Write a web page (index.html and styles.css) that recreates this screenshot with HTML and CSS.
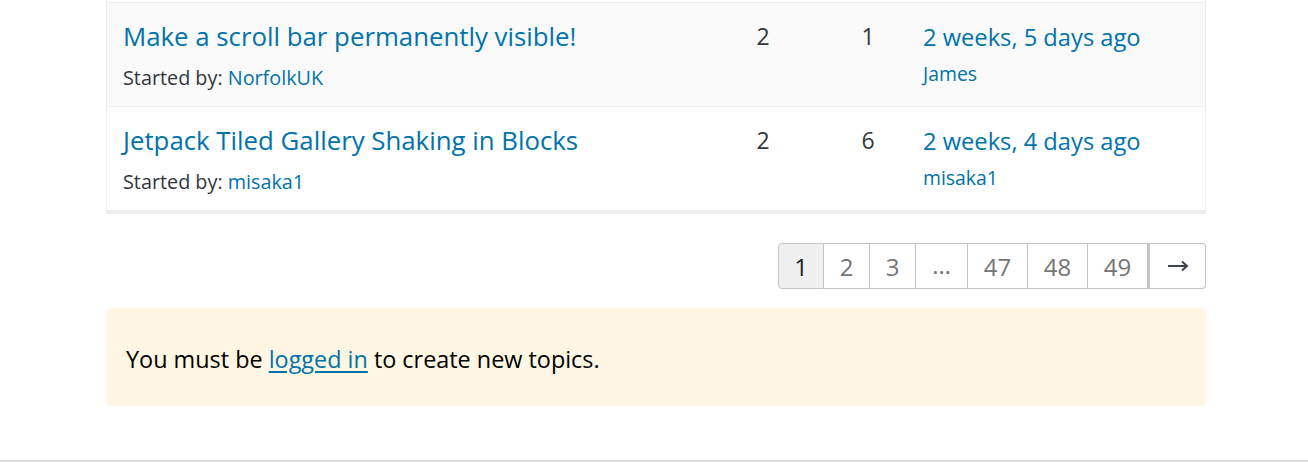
FILE: index.html
```html
<!DOCTYPE html>
<html lang="en">
<head>
<meta charset="utf-8">
<title>Topics</title>
<link rel="stylesheet" href="styles.css">
</head>
<body>
<main class="forum">
  <ul class="topics">
    <li class="topic odd">
      <div class="col-title">
        <a class="topic-link" href="#">Make a scroll bar permanently visible!</a>
        <p class="started">Started by: <a href="#">NorfolkUK</a></p>
      </div>
      <div class="col-count">2</div>
      <div class="col-count">1</div>
      <div class="col-fresh">
        <a class="fresh-link" href="#">2 weeks, 5 days ago</a>
        <a class="fresh-author" href="#">James</a>
      </div>
    </li>
    <li class="topic even">
      <div class="col-title">
        <a class="topic-link" href="#">Jetpack Tiled Gallery Shaking in Blocks</a>
        <p class="started">Started by: <a href="#">misaka1</a></p>
      </div>
      <div class="col-count">2</div>
      <div class="col-count">6</div>
      <div class="col-fresh">
        <a class="fresh-link" href="#">2 weeks, 4 days ago</a>
        <a class="fresh-author" href="#">misaka1</a>
      </div>
    </li>
  </ul>

  <nav class="pagination">
    <span class="page current">1</span>
    <a class="page" href="#">2</a>
    <a class="page" href="#">3</a>
    <span class="page dots">…</span>
    <a class="page wide" href="#">47</a>
    <a class="page wide" href="#">48</a>
    <a class="page wide" href="#">49</a>
    <a class="page next" href="#" aria-label="Next page"><svg width="22" height="12" viewBox="0 0 22 12" aria-hidden="true"><path d="M1 6H20M15 1.5L20 6L15 10.5" fill="none" stroke="#3c434a" stroke-width="2"/></svg></a>
  </nav>

  <div class="notice">
    <p>You must be <a href="#">logged in</a> to create new topics.</p>
  </div>
</main>
<footer class="site-footer"></footer>
</body>
</html>
```

FILE: styles.css
```css
* { box-sizing: border-box; }

html, body {
  margin: 0;
  padding: 0;
  background: #fff;
}

body {
  font-family: "Open Sans", "Noto Sans", sans-serif;
  color: #1e1e1e;
  height: 462px;
  display: flex;
  flex-direction: column;
}

a { color: #0073aa; text-decoration: none; }

.forum {
  width: 1100px;
  margin-left: 106px;
  flex: 1;
}

.topics {
  list-style: none;
  margin: 0;
  padding: 2px 0 0;
  border-left: 1px solid #eee;
  border-right: 1px solid #eee;
  border-bottom: 4px solid #eee;
}

.topic {
  display: grid;
  grid-template-columns: 606px 100px 110px 1fr;
  border-top: 1px solid #eee;
  height: 104px;
}

.topic.odd { background: #fafafa; }
.topic.even { background: #fff; }

.col-title {
  padding: 16px 0 0 16px;
}

.topic-link {
  display: block;
  font-size: 25.8px;
  line-height: 34px;
}

.started {
  margin: 11px 0 0;
  font-size: 19.8px;
  line-height: 28px;
  color: #32373c;
}

.col-count {
  text-align: center;
  font-size: 23px;
  line-height: 30px;
  padding-top: 18px;
  color: #32373c;
}

.col-fresh {
  padding-top: 17px;
  display: flex;
  flex-direction: column;
  align-items: flex-start;
}

.fresh-link {
  font-size: 23.7px;
  line-height: 34px;
}

.fresh-author {
  margin-top: 7px;
  font-size: 19.4px;
  line-height: 26px;
}

.pagination {
  display: flex;
  justify-content: flex-end;
  margin-top: 29px;
}

.page {
  display: flex;
  align-items: center;
  justify-content: center;
  width: 46px;
  height: 46px;
  border: 1px solid #c3c4c7;
  border-left: none;
  font-size: 24px;
  color: #757575;
  background: #fff;
}

.page:first-child {
  border-left: 1px solid #c3c4c7;
  border-radius: 4px 0 0 4px;
}

.page:last-child { border-radius: 0 4px 4px 0; }

.page.current {
  background: #f0f0f0;
  color: #1e1e1e;
}

.page.dots { width: 52px; padding-bottom: 4px; }
.page.wide { width: 60px; }
.page.next {
  width: 58px;
  border-left: 2px solid #c3c4c7;
}

.notice {
  margin-top: 19px;
  background: #fff7e4;
  border-radius: 5px;
  height: 98px;
  display: flex;
  align-items: center;
  padding: 4px 20px 0;
}

.notice p {
  margin: 0;
  font-size: 23.4px;
  line-height: 32px;
  color: #000;
}

.notice a { text-decoration: underline; text-underline-offset: 3px; }

.site-footer {
  height: 2px;
  background: #dcdcde;
}
```
